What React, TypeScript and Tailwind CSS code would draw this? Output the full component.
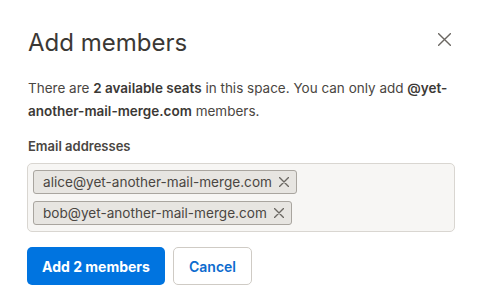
const emails = ['alice@yet-another-mail-merge.com', 'bob@yet-another-mail-merge.com']

function Cross({ size, className }: { size: number; className?: string }) {
  return (
    <svg width={size} height={size} viewBox="0 0 10 10" className={className} fill="none" stroke="currentColor" strokeWidth={10 / size * 1.4} strokeLinecap="round">
      <path d="M0.5 0.5 L9.5 9.5 M9.5 0.5 L0.5 9.5" />
    </svg>
  )
}

export default function App() {
  return (
    <div className="w-[477px] h-[308px] bg-white font-['Inter',sans-serif] text-[#3d3a36]">
      <div className="px-7 pt-[28px]">
        <div className="flex items-start justify-between">
          <h2 className="text-[24px] leading-[30px] text-[#3b3835]">Add members</h2>
          <button className="mt-[5px] -mr-[2px] text-[#6b6762]">
            <Cross size={13} />
          </button>
        </div>

        <p className="mt-[19px] -mr-[4px] text-[13.5px] leading-[23px] text-[#4a4642]">
          There are <span className="font-semibold text-[#3b3835]">2 available seats</span> in this space. You can only add{' '}
          <span className="font-semibold text-[#3b3835]">@yet-another-mail-merge.com</span> members.
        </p>

        <label className="block mt-[13px] text-[13px] leading-[20px] font-semibold text-[#4a4642]">
          Email addresses
        </label>

        <div className="mt-[7px] w-[428px] -ml-px rounded-[5px] border border-[#d9d6d1] bg-[#f7f6f4] px-[5px] py-[6px] flex flex-col items-start gap-[7px]">
          {emails.map(e => (
            <div
              key={e}
              className="flex items-center gap-[7px] h-[24px] pl-[9px] pr-[7px] rounded-[3px] border border-[#a9a59f] bg-[#e7e5e1] text-[13.6px] text-[#4a4642]"
            >
              {e}
              <Cross size={10} className="text-[#6b6762]" />
            </div>
          ))}
        </div>

        <div className="mt-[15px] flex gap-2 -ml-px">
          <button className="h-[38px] w-[138px] rounded-[5px] bg-[#0074e0] text-white text-[14px] font-bold">
            Add 2 members
          </button>
          <button className="h-[38px] w-[79px] rounded-[5px] border border-[#cfcbc5] bg-white text-[#0b6bce] text-[14px] font-semibold">
            Cancel
          </button>
        </div>
      </div>
    </div>
  )
}
